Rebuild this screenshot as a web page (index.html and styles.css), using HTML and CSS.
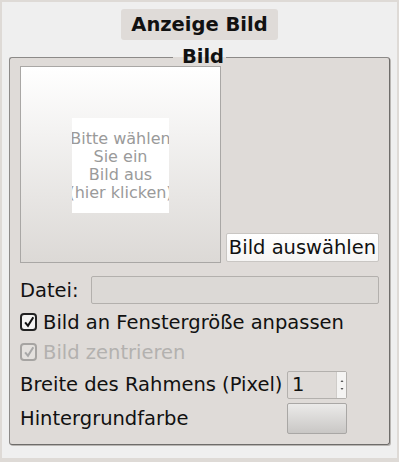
FILE: index.html
```html
<!DOCTYPE html>
<html lang="de">
<head>
    <meta charset="UTF-8">
    <title>Anzeige Bild</title>
    <link rel="stylesheet" href="styles.css">
</head>
<body>
    <div class="window">
        <div class="title-row">
            <div class="title">Anzeige Bild</div>
        </div>

        <fieldset class="group">
            <legend>Bild</legend>

            <div class="top-row">
                <div class="preview">
                    <div class="preview-hint">Bitte wählen<br>Sie ein<br>Bild aus<br>(hier klicken)</div>
                </div>
                <button class="button">Bild auswählen</button>
            </div>

            <div class="file-row">
                <span>Datei:</span>
                <div class="file-input"></div>
            </div>

            <label class="check-row first">
                <span class="check"><svg viewBox="0 0 14 14"><path d="M2.5 7.5 L5.8 11.5 L12 1.5" fill="none" stroke="#111" stroke-width="2.4"/></svg></span>
                Bild an Fenstergröße anpassen
            </label>

            <label class="check-row disabled">
                <span class="check"><svg viewBox="0 0 14 14"><path d="M2.5 7.5 L5.8 11.5 L12 1.5" fill="none" stroke="#a8a8a8" stroke-width="2.4"/></svg></span>
                Bild zentrieren
            </label>

            <div class="field-row">
                <span class="field-label">Breite des Rahmens (Pixel)</span>
                <div class="spin">
                    <span class="spin-value">1</span>
                    <span class="spin-arrows">
                        <svg viewBox="0 0 8 26" width="8" height="26"><path d="M2.5 10 L4 8 L5.5 10 Z M2.5 16 L4 18 L5.5 16 Z" fill="#555"/></svg>
                    </span>
                </div>
            </div>

            <div class="field-row">
                <span class="field-label">Hintergrundfarbe</span>
                <div class="color-button"></div>
            </div>
        </fieldset>
    </div>
</body>
</html>
```

FILE: styles.css
```css
html, body {
    margin: 0;
    padding: 0;
}
body {
    font-family: "DejaVu Sans", sans-serif;
    font-size: 19.5px;
    color: #111;
    background: #efefef;
}
.window {
    box-sizing: border-box;
    width: 399px;
    height: 462px;
    border: 2px solid #dedad6;
    border-bottom-width: 4px;
    background: #efefef;
}
.title-row {
    display: flex;
    justify-content: center;
    padding-top: 7px;
}
.title {
    background: #dfdbd8;
    border-radius: 3px;
    font-weight: bold;
    font-size: 19.5px;
    width: 157px;
    height: 31px;
    line-height: 31px;
    text-align: center;
}
.group {
    margin: 8px 7px 0 7px;
    padding: 0 10px;
    height: 397px;
    box-sizing: border-box;
    border: 1px solid #8c8a88;
    border-right-color: #6e6c6a;
    border-bottom-color: #6e6c6a;
    border-radius: 3px;
    background: #dfdbd8;
    box-shadow: 1px 1px 0 #b9b6b3;
}
.group legend {
    margin: 0 auto;
    padding: 0 2px 0 9px;
    font-weight: bold;
    font-size: 19.5px;
    line-height: 18px;
}
.top-row {
    display: flex;
    align-items: flex-end;
    gap: 5px;
}
.preview {
    box-sizing: border-box;
    width: 201px;
    height: 197px;
    border: 1px solid #a9a7a5;
    background: linear-gradient(#ffffff, #dcd9d6);
    display: flex;
    align-items: center;
    justify-content: center;
}
.preview-hint {
    width: 97px;
    height: 95px;
    background: #fff;
    color: #9a9a9a;
    font-size: 16px;
    line-height: 18px;
    text-align: center;
    white-space: nowrap;
    overflow: hidden;
    display: flex;
    align-items: center;
    justify-content: center;
    margin-top: 2px;
}
.button {
    box-sizing: border-box;
    width: 153px;
    height: 29px;
    font-family: inherit;
    font-size: 19.5px;
    color: #111;
    background: linear-gradient(#ffffff, #f6f5f4);
    border: 1px solid #c9c6c3;
    border-radius: 2px;
    padding: 0;
    margin-bottom: 1px;
}
.file-row {
    display: flex;
    align-items: center;
    justify-content: space-between;
    margin-top: 13px;
    height: 28px;
}
.file-input {
    box-sizing: border-box;
    width: 288px;
    height: 28px;
    border: 1px solid #b3b0ad;
    border-radius: 2px;
    background: #dcd9d6;
}
.check-row {
    display: flex;
    align-items: center;
    gap: 6px;
    height: 30px;
}
.check-row.first {
    margin-top: 3px;
}
.check {
    box-sizing: border-box;
    flex-shrink: 0;
    width: 17px;
    height: 18px;
    border: 2px solid #222;
    border-radius: 4px;
    background: #f4f3f2;
    display: flex;
    align-items: center;
    justify-content: center;
}
.check svg {
    width: 12px;
    height: 12px;
}
.disabled {
    color: #b3b1af;
}
.disabled .check {
    border-color: #a6a4a2;
    background: #e4e1de;
}
.field-row {
    display: flex;
    align-items: center;
    height: 33px;
    margin-top: 1px;
}
.field-label {
    width: 267px;
    white-space: nowrap;
}
.spin {
    box-sizing: border-box;
    width: 60px;
    height: 28px;
    border: 1px solid #b3b0ad;
    border-radius: 2px;
    background: #dfdbd8;
    display: flex;
    align-items: center;
}
.spin-value {
    flex: 1;
    padding-left: 4px;
}
.spin-arrows {
    width: 9px;
    height: 26px;
    border-left: 1px solid #cfccc9;
    background: #f5f4f3;
    display: flex;
    align-items: center;
    justify-content: center;
}
.color-button {
    box-sizing: border-box;
    width: 60px;
    height: 31px;
    border: 1px solid #a9a7a5;
    border-radius: 2px;
    background: linear-gradient(#ebeae9, #c9c7c5);
}
```
